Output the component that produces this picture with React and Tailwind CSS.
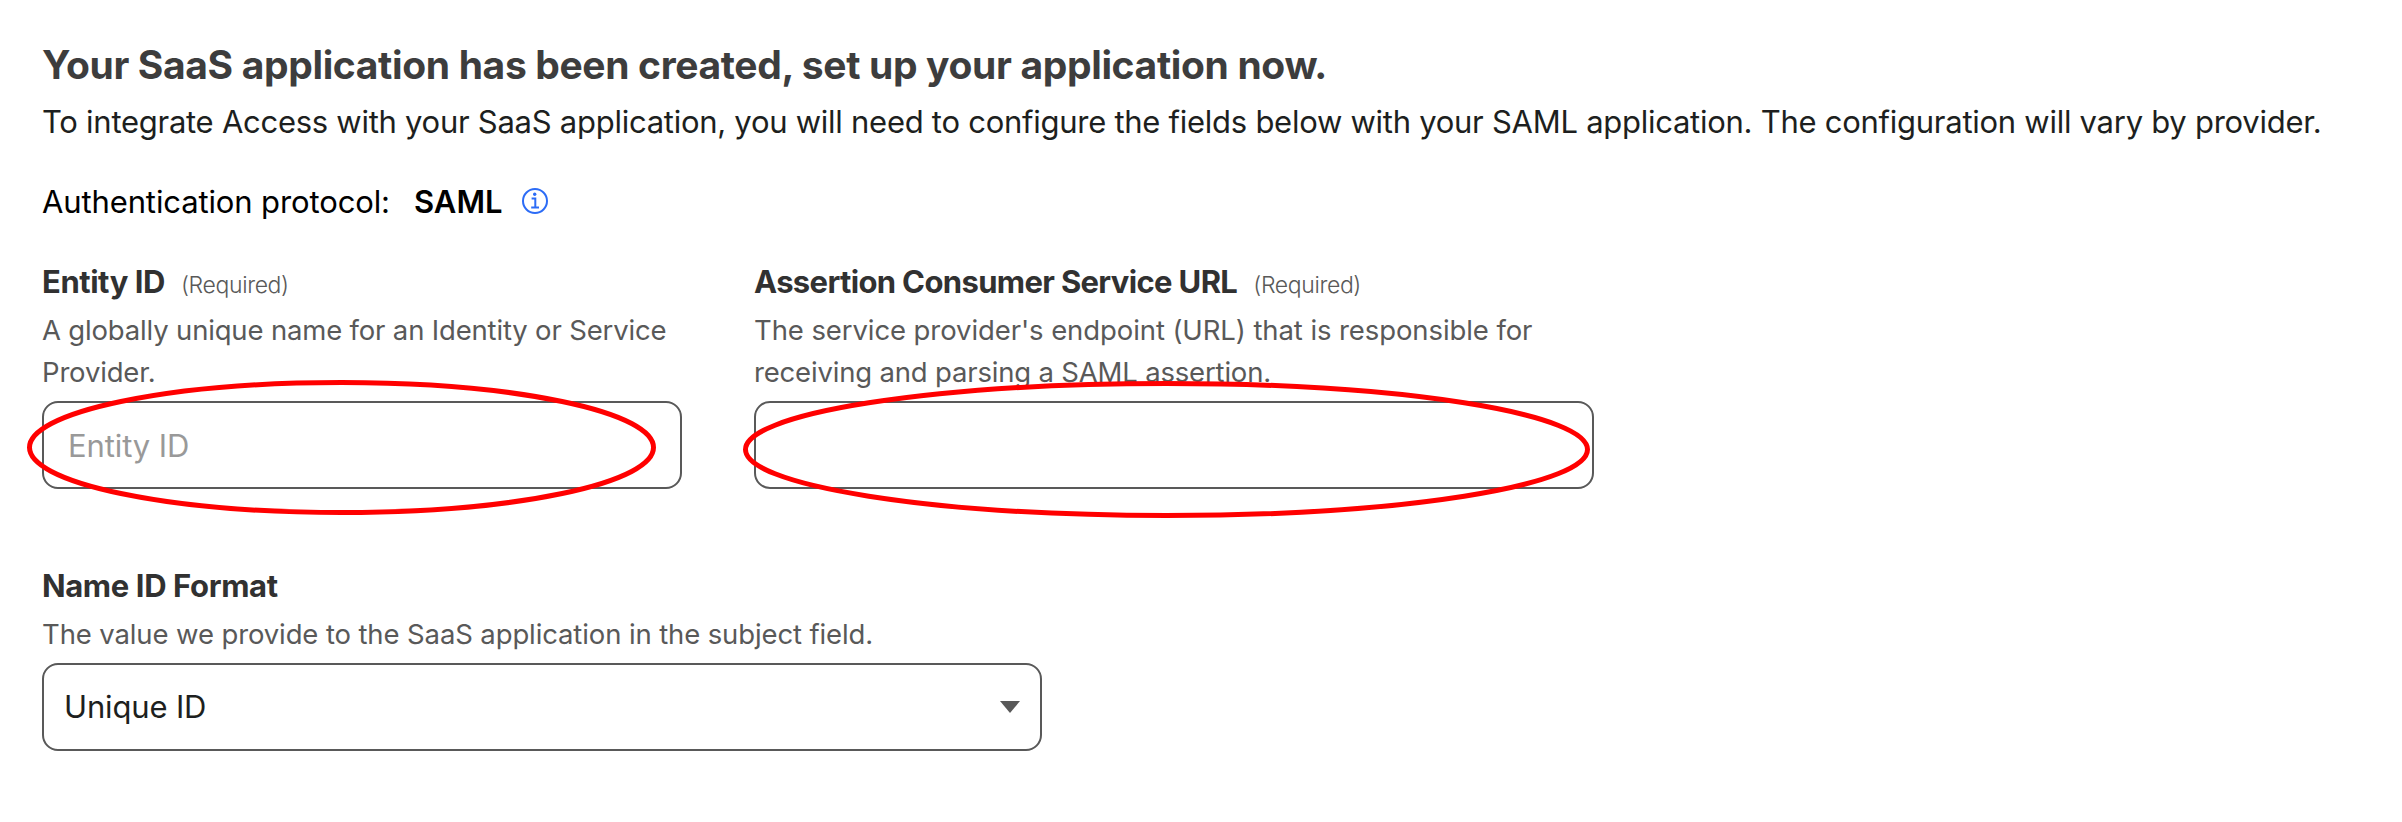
function InfoIcon() {
  return (
    <svg className="mb-[3px] ml-[19px] size-[26px] shrink-0" viewBox="0 0 26 26" fill="none" stroke="#2c6cf6">
      <circle cx="13" cy="13" r="12" strokeWidth="2" />
      <path d="M9.6 10.6H13.3V19.5M9.2 19.6H17" strokeWidth="2" />
      <circle cx="12.7" cy="6.2" r="1.7" fill="#2c6cf6" stroke="none" />
    </svg>
  );
}

function Highlight({ className, width, height }) {
  return (
    <svg className={className} width={width} height={height} fill="none">
      <ellipse
        cx={width / 2}
        cy={height / 2}
        rx={width / 2 - 2.5}
        ry={height / 2 - 2.5}
        stroke="#ff0000"
        strokeWidth="5"
      />
    </svg>
  );
}

function Required() {
  return <span className="text-[23px] font-light tracking-[-0.37px] text-[#595959]">(Required)</span>;
}

export default function App() {
  return (
    <main className="h-[822px] w-[2402px] overflow-hidden bg-white pl-[42px] pt-[41px] font-['Inter',sans-serif] text-[31px] leading-[48px] whitespace-nowrap">
      <h1 className="text-[39px] font-bold tracking-[-0.35px] text-[#3d3d3d]">
        Your SaaS application has been created, set up your application now.
      </h1>
      <p className="mt-[9px] tracking-[-0.267px] text-[#1d1f20]">
        To integrate Access with your SaaS application, you will need to configure the fields below with your SAML
        application. The configuration will vary by provider.
      </p>

      <div className="mt-8 flex h-12 items-center text-black">
        <span className="w-[372px] tracking-[-0.12px]">Authentication protocol:</span>
        <span className="font-semibold">SAML</span>
        <InfoIcon />
      </div>

      <div className="mt-8 flex gap-[72px]">
        <label className="relative block w-[640px]">
          <span className="flex h-12 items-baseline gap-4">
            <span className="font-bold tracking-[-0.45px] text-[#313131]">Entity ID</span>
            <Required />
          </span>
          <span className="mt-[3px] block text-[27.5px] leading-[42px] tracking-[-0.17px] text-[#595959]">
            A globally unique name for an Identity or Service
            <br />
            Provider.
          </span>
          <input
            className="mt-2 block h-[88px] w-full rounded-2xl border-2 border-[#595959] bg-white px-6 tracking-[-0.1px] placeholder:text-[#999999] placeholder:opacity-100"
            placeholder="Entity ID"
          />
          <Highlight className="pointer-events-none absolute left-[-15px] top-[122px]" width={629} height={135} />
        </label>

        <label className="relative block w-[840px]">
          <span className="flex h-12 items-baseline gap-4">
            <span className="font-bold tracking-[-0.65px] text-[#313131]">Assertion Consumer Service URL</span>
            <Required />
          </span>
          <span className="mt-[3px] block text-[27.5px] leading-[42px] tracking-[-0.09px] text-[#595959]">
            The service provider's endpoint (URL) that is responsible for
            <br />
            <span className="tracking-[-0.18px]">receiving and parsing a SAML assertion.</span>
          </span>
          <input className="mt-2 block h-[88px] w-full rounded-2xl border-2 border-[#595959] bg-white px-6" />
          <Highlight className="pointer-events-none absolute left-[-11px] top-[123px]" width={847} height={137} />
        </label>
      </div>

      <section className="mt-[73px] w-[1000px]">
        <h2 className="font-bold tracking-[-0.38px] text-[#313131]">Name ID Format</h2>
        <p className="mt-[3px] text-[27.5px] leading-[42px] tracking-[-0.12px] text-[#595959]">
          The value we provide to the SaaS application in the subject field.
        </p>
        <button
          type="button"
          className="mt-2 flex h-[88px] w-full items-center justify-between rounded-2xl border-2 border-[#595959] bg-white pl-5 pr-5 text-[#1d1f20]"
        >
          <span className="tracking-[-0.15px]">Unique ID</span>
          <svg className="h-3 w-5" viewBox="0 0 20 12" fill="#595959">
            <path d="M0 0H20L10 12Z" />
          </svg>
        </button>
      </section>
    </main>
  );
}
